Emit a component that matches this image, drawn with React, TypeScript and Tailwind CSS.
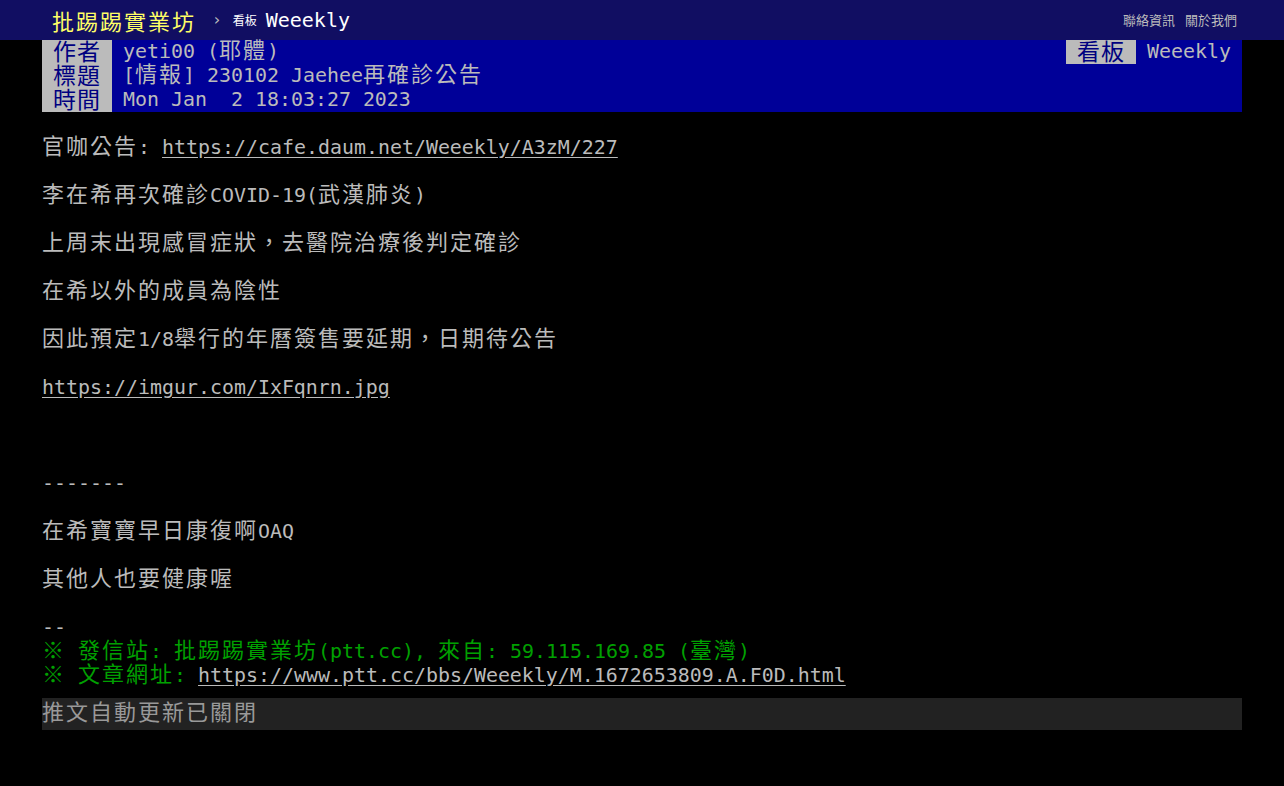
import React from "react";

const MONO = { fontFamily: '"DejaVu Sans Mono", "Noto Sans CJK TC", monospace' };
const CJK_RE = /([\u2E80-\u9FFF\uF900-\uFAFF\uFF00-\uFFEF※]+)/;

// CJK runs take two cells (24px), latin runs one cell (12px)
function T({ s, big = false }: { s: string; big?: boolean }) {
  const parts = s.split(CJK_RE);
  return (
    <>
      {parts.map((p, i) =>
        i % 2 === 1 ? (
          <span
            key={i}
            className={
              big
                ? "relative top-[2px] text-[23px] tracking-[1px] leading-[0]"
                : "text-[22px] tracking-[2px] leading-[0]"
            }
            style={{ fontFamily: '"Noto Sans CJK TC", sans-serif' }}
          >
            {p}
          </span>
        ) : (
          <span key={i}>{p}</span>
        )
      )}
    </>
  );
}

function Line({ children }: { children?: React.ReactNode }) {
  return <div className="h-[24px] leading-[24px] whitespace-pre">{children}</div>;
}

function Link({ href }: { href: string }) {
  return <a className="underline underline-offset-[3px] text-[#bbb]">{href}</a>;
}

function MetaRow({ tag, value, right }: { tag: string; value: string; right?: { tag: string; value: string } }) {
  return (
    <div className="flex h-[24px] leading-[24px] bg-[#000098]">
      <div className="w-[70px] text-center bg-[#bbb] text-[#000080]">
        <T s={tag} big />
      </div>
      <div className="ml-[11px] flex-1 text-[#bbb] whitespace-pre">
        <T s={value} />
      </div>
      {right && (
        <div className="flex pr-[11px]">
          <div className="w-[70px] text-center bg-[#bbb] text-[#000080]">
            <T s={right.tag} big />
          </div>
          <div className="ml-[11px] text-[#bbb]">{right.value}</div>
        </div>
      )}
    </div>
  );
}

export default function App() {
  return (
    <div className="min-h-screen bg-black text-[#bbb] text-[19.93px]" style={MONO}>
      {/* Top bar */}
      <div className="bg-[#110e62] h-[40px]">
        <div className="w-[1200px] mx-auto h-full flex items-center px-[10px]">
          <span className="text-[#ffff66] text-[22px] tracking-[2px] leading-[40px]" style={{ fontFamily: '"Noto Sans CJK TC", sans-serif' }}>
            批踢踢實業坊
          </span>
          <span className="ml-[16px] text-[#bbb] text-[16px]">›</span>
          <span className="ml-[11px] text-[12px] text-white" style={{ fontFamily: '"Noto Sans CJK TC", sans-serif' }}>看板</span>
          <span className="ml-[9px] text-white text-[20px]">Weeekly</span>
          <div className="ml-auto mr-[-5px] flex gap-[10px] text-[13px] text-[#bbb]" style={{ fontFamily: '"Noto Sans CJK TC", sans-serif' }}>
            <span>聯絡資訊</span>
            <span>關於我們</span>
          </div>
        </div>
      </div>

      <div className="w-[1200px] mx-auto">
        <MetaRow tag="作者" value="yeti00 (耶體)" right={{ tag: "看板", value: "Weeekly" }} />
        <MetaRow tag="標題" value="[情報] 230102 Jaehee再確診公告" />
        <MetaRow tag="時間" value="Mon Jan  2 18:03:27 2023" />

        <Line />
        <Line>
          <T s="官咖公告: " />
          <Link href="https://cafe.daum.net/Weeekly/A3zM/227" />
        </Line>
        <Line />
        <Line><T s="李在希再次確診COVID-19(武漢肺炎)" /></Line>
        <Line />
        <Line><T s="上周末出現感冒症狀，去醫院治療後判定確診" /></Line>
        <Line />
        <Line><T s="在希以外的成員為陰性" /></Line>
        <Line />
        <Line><T s="因此預定1/8舉行的年曆簽售要延期，日期待公告" /></Line>
        <Line />
        <Line><Link href="https://imgur.com/IxFqnrn.jpg" /></Line>
        <Line />
        <Line />
        <Line />
        <Line>-------</Line>
        <Line />
        <Line><T s="在希寶寶早日康復啊OAQ" /></Line>
        <Line />
        <Line><T s="其他人也要健康喔" /></Line>
        <Line />
        <Line>--</Line>
        <Line>
          <span className="text-[#00a000]"><T s="※ 發信站: 批踢踢實業坊(ptt.cc), 來自: 59.115.169.85 (臺灣)" /></span>
        </Line>
        <Line>
          <span className="text-[#00a000]"><T s="※ 文章網址: " /></span>
          <Link href="https://www.ptt.cc/bbs/Weeekly/M.1672653809.A.F0D.html" />
        </Line>

        <div className="mt-[10px] h-[32px] leading-[32px] bg-[#222] text-[#999]">
          <T s="推文自動更新已關閉" />
        </div>
      </div>
    </div>
  );
}
